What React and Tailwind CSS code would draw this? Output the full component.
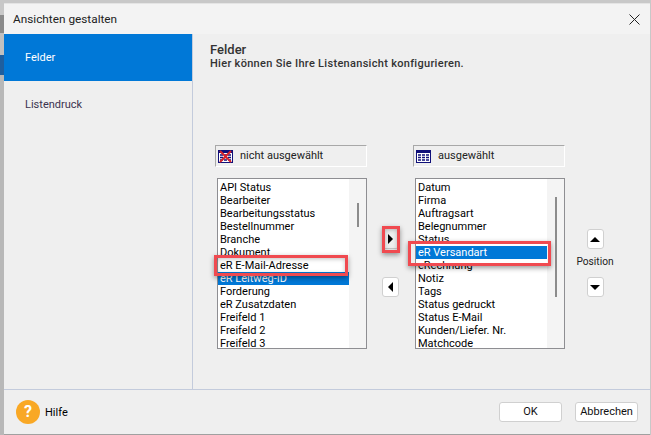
import React from 'react';

const font = { fontFamily: 'Roboto, sans-serif' };

const leftItems = ['API Status', 'Bearbeiter', 'Bearbeitungsstatus', 'Bestellnummer', 'Branche', 'Dokument', 'eR E-Mail-Adresse', 'eR Leitweg-ID', 'Forderung', 'eR Zusatzdaten', 'Freifeld 1', 'Freifeld 2', 'Freifeld 3'];
const rightItems = ['Datum', 'Firma', 'Auftragsart', 'Belegnummer', 'Status', 'eR Versandart', 'eRechnung', 'Notiz', 'Tags', 'Status gedruckt', 'Status E-Mail', 'Kunden/Liefer. Nr.', 'Matchcode'];

function GridIcon({ crossed }) {
    return (
        <svg width="15" height="13" viewBox="0 0 15 13" className="shrink-0">
            <rect x="0.5" y="0.5" width="14" height="12" fill="#fff" stroke="#10107a" />
            <rect x="0" y="0" width="15" height="3" fill="#10107a" />
            <path d="M2 5h3M6 5h3M10 5h3M2 7.5h3M6 7.5h3M10 7.5h3M2 10h3M6 10h3M10 10h3" stroke="#10107a" strokeWidth="1.5" />
            {crossed && <path d="M2 1l11 11M13 1L2 12" stroke="#d8242c" strokeWidth="2" />}
        </svg>
    );
}

function Arrow({ dir }) {
    const points = { right: '1,0 6,5 1,10', left: '6,0 1,5 6,10', up: '0,6 5,1 10,6', down: '0,1 5,6 10,1' };
    const wide = dir === 'up' || dir === 'down';
    return (
        <svg width={wide ? 10 : 7} height={wide ? 7 : 10} viewBox={wide ? '0 0 10 7' : '0 0 7 10'}>
            <polygon points={points[dir]} fill="#000" />
        </svg>
    );
}

function IconButton({ dir, flat }) {
    return (
        <button className={`w-[17px] h-[20px] flex items-center justify-center rounded-[3px] border ${flat ? 'bg-transparent border-transparent border-b-[#c8c8c8]' : 'bg-white border-[#d0d0d0]'}`}>
            <Arrow dir={dir} />
        </button>
    );
}

function ListBox({ items, selected, thumbClass }) {
    return (
        <div className="w-[150px] h-[171px] border border-[#8e8e92] bg-white flex overflow-hidden">
            <div className="w-[131px] pt-[2px] overflow-hidden">
                {items.map(item => (
                    <div key={item} className={`h-[13px] pl-[2px] text-[11px] leading-[13px] whitespace-nowrap ${item === selected ? 'bg-[#0078d7] text-white' : 'text-black'}`}>
                        {item}
                    </div>
                ))}
            </div>
            <div className="w-[17px] bg-[#f4f4f4] flex justify-center">
                <div className={`w-[2px] bg-[#8c8c8c] ${thumbClass}`}></div>
            </div>
        </div>
    );
}

function ListHeader({ crossed, label }) {
    return (
        <div className="w-[152px] h-[22px] flex items-center gap-[7px] pl-[2px] border border-t-[#a8a8a8] border-l-[#a8a8a8] border-r-white border-b-white text-[11px] text-[#222]">
            <GridIcon crossed={crossed} />
            <span className="pt-[1px]">{label}</span>
        </div>
    );
}

export default function App() {
    return (
        <div className="w-[651px] h-[435px] bg-[#b8b8b8] flex overflow-hidden relative" style={font}>
            <div className="w-[4px] shrink-0 flex flex-col bg-[#b8b8b8]">
                <div className="h-[15px] bg-[#c8c8c8]"></div>
                <div className="h-[18px] bg-[#8a8a8a]"></div>
                <div className="h-[22px] bg-[#c0c0c0]"></div>
                <div className="h-[20px] bg-[#1f5f9f]"></div>
            </div>
            <div className="flex-1 flex flex-col pt-[3px] bg-[#c8c8c8]">
                <div className="w-[646px] flex-1 bg-[#efefef] flex flex-col border-t border-[#e4e4e4] border-b border-b-[#a0a0a0] min-h-0">
                    <div className="h-[30px] flex items-center justify-between pl-[9px] pr-[10px] bg-[#f3f3f3] text-[11.8px] text-[#222] shrink-0">
                        <span className="pt-[1px]">Ansichten gestalten</span>
                        <svg width="11" height="11" viewBox="0 0 11 11"><path d="M.5.5l10 10M10.5.5l-10 10" stroke="#222" /></svg>
                    </div>
                    <div className="flex-1 flex min-h-0">
                        <div className="w-[189px] border-r border-[#c3cbdc] shrink-0">
                            <div className="h-[47px] pt-[2px] bg-[#0078d7] text-white text-[11px] flex items-center pl-[21px]">Felder</div>
                            <div className="h-[47px] pt-[2px] text-[#3c3350] text-[11px] flex items-center pl-[21px]">Listendruck</div>
                        </div>
                        <div className="flex-1 pl-[17px] pt-[8px] text-[#333]">
                            <div className="text-[13px] leading-[15px] font-medium">Felder</div>
                            <div className="text-[11px] leading-[14px] font-medium tracking-[0.3px]">Hier können Sie Ihre Listenansicht konfigurieren.</div>
                            <div className="flex mt-[74px] ml-[5px]">
                                <div className="flex flex-col items-end gap-[11px]">
                                    <ListHeader crossed label="nicht ausgewählt" />
                                    <ListBox items={leftItems} selected="eR Leitweg-ID" thumbClass="h-[24px] mt-[24px]" />
                                </div>
                                <div className="flex flex-col gap-[28px] ml-[15px] mr-[14px] pt-[84px]">
                                    <IconButton dir="right" flat />
                                    <IconButton dir="left" />
                                </div>
                                <div className="flex flex-col items-end gap-[11px]">
                                    <ListHeader label="ausgewählt" />
                                    <ListBox items={rightItems} selected="eR Versandart" thumbClass="h-[100px] mt-[18px]" />
                                </div>
                                <div className="w-[38px] flex flex-col items-center ml-[11px] pt-[84px] text-[10.2px] text-[#222]">
                                    <IconButton dir="up" />
                                    <div className="h-[28px] pb-[2px] flex items-center whitespace-nowrap">Position</div>
                                    <IconButton dir="down" />
                                </div>
                            </div>
                        </div>
                    </div>
                    <div className="h-[45px] border-t border-[#c3cbdc] flex items-center justify-between pl-[12px] pr-[12px] shrink-0">
                        <div className="flex items-center gap-[5px] text-[11px] text-black">
                            <span className="w-[24px] h-[24px] rounded-full bg-[#f9a825] text-white font-bold text-[16px] flex items-center justify-center">?</span>
                            <span className="pt-[2px]">Hilfe</span>
                        </div>
                        <div className="flex gap-[13px]">
                            <button className="w-[63px] h-[20px] pt-[1px] bg-white border border-[#d0d0d0] rounded-[3px] text-[11px] text-[#111]">OK</button>
                            <button className="w-[63px] h-[20px] pt-[1px] bg-white border border-[#d0d0d0] rounded-[3px] text-[11px] text-[#111]">Abbrechen</button>
                        </div>
                    </div>
                </div>
            </div>
            <div className="absolute left-[214px] top-[255px] w-[134px] h-[21px] border-[3px] border-[#f04a50] shadow-[0_2px_5px_rgba(0,0,0,0.4),inset_0_1px_4px_rgba(0,0,0,0.25)]"></div>
            <div className="absolute left-[382px] top-[226px] w-[18px] h-[27px] border-[3px] border-[#f04a50] shadow-[0_2px_5px_rgba(0,0,0,0.4),inset_0_1px_4px_rgba(0,0,0,0.25)]"></div>
            <div className="absolute left-[408px] top-[241px] w-[143px] h-[25px] border-[3px] border-[#f04a50] shadow-[0_2px_5px_rgba(0,0,0,0.4)]"></div>
        </div>
    );
}
